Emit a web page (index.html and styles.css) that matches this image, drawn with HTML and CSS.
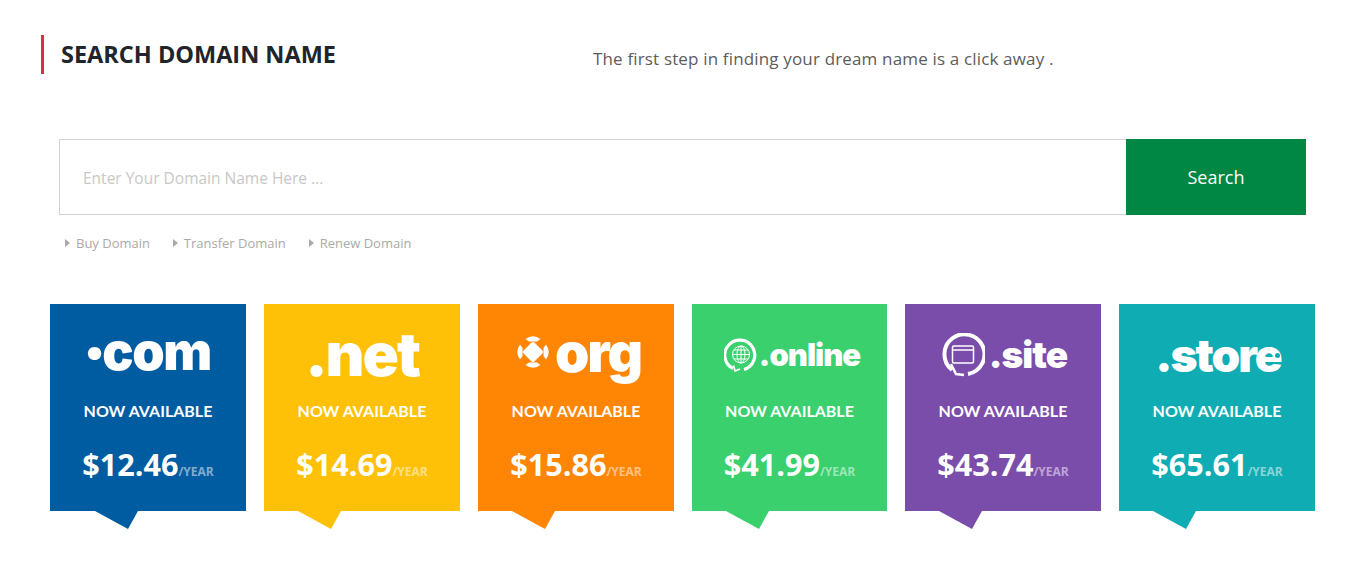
FILE: index.html
```html
<!DOCTYPE html>
<html lang="en">
<head>
  <meta charset="UTF-8">
  <meta name="viewport" content="width=device-width, initial-scale=1.0">
  <title>Search Domain Name</title>
  <link rel="stylesheet" href="styles.css">
</head>
<body>
  <header class="intro">
    <h1>SEARCH DOMAIN NAME</h1>
    <p>The first step in finding your dream name is a click away .</p>
  </header>

  <form class="search">
    <input type="text" placeholder="Enter Your Domain Name Here ...">
    <button type="button">Search</button>
  </form>

  <ul class="links">
    <li><a href="#">Buy Domain</a></li>
    <li><a href="#">Transfer Domain</a></li>
    <li><a href="#">Renew Domain</a></li>
  </ul>

  <section class="cards">
    <article class="card card-com">
      <div class="card-body">
        <div class="logo logo-com"><span class="mid-dot">.</span>com</div>
        <h3>NOW AVAILABLE</h3>
        <p class="price">$12.46<small>/YEAR</small></p>
      </div>
      <svg class="tail" width="43" height="18" viewBox="0 0 43 18"><polygon points="0,0 43,0 33,18"/></svg>
    </article>

    <article class="card card-net">
      <div class="card-body">
        <div class="logo logo-net">.net</div>
        <h3>NOW AVAILABLE</h3>
        <p class="price">$14.69<small>/YEAR</small></p>
      </div>
      <svg class="tail" width="43" height="18" viewBox="0 0 43 18"><polygon points="0,0 43,0 33,18"/></svg>
    </article>

    <article class="card card-org">
      <div class="card-body">
        <div class="logo logo-org">
          <svg width="34" height="34" viewBox="0 0 34 34" fill="#fff">
            <path d="M17 9 25 17 17 25 9 17Z" stroke="#fff" stroke-width="4" stroke-linejoin="round"/>
            <path d="M9.500 4Q17-1.500 24.500 4L21 6.500H13Z"/>
            <path d="M9.500 30Q17 35.500 24.500 30L21 27.500H13Z"/>
            <path d="M4 9.500Q-1.500 17 4 24.500L6.500 21V13Z"/>
            <path d="M30 9.500Q35.500 17 30 24.500L27.500 21V13Z"/>
          </svg>
          <span>org</span>
        </div>
        <h3>NOW AVAILABLE</h3>
        <p class="price">$15.86<small>/YEAR</small></p>
      </div>
      <svg class="tail" width="43" height="18" viewBox="0 0 43 18"><polygon points="0,0 43,0 33,18"/></svg>
    </article>

    <article class="card card-online">
      <div class="card-body">
        <div class="logo logo-online">
          <svg width="34" height="34" viewBox="0 0 34 34" fill="none" stroke="#fff">
            <path d="M9 30.500A15 15 0 1 1 20 31.500" stroke-width="3.200"/>
            <path d="M9.500 27.500 11 33 16 31" stroke-width="1.600"/>
            <g stroke-width="1">
              <circle cx="17" cy="16.500" r="8.500"/>
              <ellipse cx="17" cy="16.500" rx="4" ry="8.500"/>
              <path d="M17 8V25M8.500 16.500H25.500M10 12H24M10 21H24"/>
            </g>
          </svg>
          <span>.online</span>
        </div>
        <h3>NOW AVAILABLE</h3>
        <p class="price">$41.99<small>/YEAR</small></p>
      </div>
      <svg class="tail" width="43" height="18" viewBox="0 0 43 18"><polygon points="0,0 43,0 33,18"/></svg>
    </article>

    <article class="card card-site">
      <div class="card-body">
        <div class="logo logo-site">
          <svg width="44" height="44" viewBox="0 0 44 44" fill="none" stroke="#fff">
            <path d="M11 37A20 20 0 1 1 27 41" stroke-width="4"/>
            <path d="M10 31 15 41 23 42" stroke-width="2.500"/>
            <rect x="11.500" y="13" width="21" height="17" rx="1.500" stroke-width="1.500"/>
            <path d="M12 17H32" stroke-width="1.500"/>
          </svg>
          <span>.site</span>
        </div>
        <h3>NOW AVAILABLE</h3>
        <p class="price">$43.74<small>/YEAR</small></p>
      </div>
      <svg class="tail" width="43" height="18" viewBox="0 0 43 18"><polygon points="0,0 43,0 33,18"/></svg>
    </article>

    <article class="card card-store">
      <div class="card-body">
        <div class="logo logo-store">.store<i class="store-dot"></i></div>
        <h3>NOW AVAILABLE</h3>
        <p class="price">$65.61<small>/YEAR</small></p>
      </div>
      <svg class="tail" width="43" height="18" viewBox="0 0 43 18"><polygon points="0,0 43,0 33,18"/></svg>
    </article>
  </section>
</body>
</html>
```

FILE: styles.css
```css
* { box-sizing: border-box; }
body { margin: 0; padding: 35px 39px 0 50px; font-family: "Open Sans", sans-serif; background: #fff; }

.intro { display: flex; height: 39px; margin-left: -9px; }
.intro h1 { width: 552px; margin: 0; padding: 2px 0 0 17px; border-left: 3px solid #dc2f45; font-size: 23.5px; line-height: 34px; font-weight: 700; color: #212529; }
.intro p { margin: 0; padding-top: 10px; font-size: 17px; line-height: 28px; letter-spacing: .16px; color: #5c5c5c; }

.search { display: flex; height: 76px; margin: 65px 9px 0 9px; }
.search input { flex: 1; padding: 2px 23px 0; border: 1px solid #d2d2d2; border-right: 0; font-family: inherit; font-size: 15.5px; outline: none; }
.search input::placeholder { color: #c8c8c8; opacity: 1; }
.search button { width: 180px; border: 0; background: #008744; color: #fff; font-family: inherit; font-size: 18px; font-weight: 500; }

.links { display: flex; gap: 22.8px; margin: 18px 0 0 15px; padding: 0; list-style: none; font-size: 13px; line-height: 20px; }
.links li { display: flex; align-items: center; }
.links li::before { content: ""; margin-right: 6px; border-left: 5px solid #aaa; border-top: 4px solid transparent; border-bottom: 4px solid transparent; }
.links a { color: #aaa; text-decoration: none; }

.cards { display: grid; grid-template-columns: 196px 196px 196px 195px 196px 196px; gap: 18px; margin-top: 51px; }
.card { color: #fff; text-align: center; }
.card-body { height: 207px; padding-top: 26px; background: var(--tone); }
.tail { display: block; margin-left: 34px; fill: var(--tone); }
.card-com .tail { margin-left: 45px; }

.card-com { --tone: #005ca1; }
.card-net { --tone: #ffc107; }
.card-org { --tone: #ff8505; }
.card-online { --tone: #39d06d; }
.card-site { --tone: #7b4dab; }
.card-store { --tone: #10acb3; }

.card h3 { margin: 21px 0 0; font-family: Lato, sans-serif; font-size: 16px; line-height: 20px; font-weight: 700; }
.price { margin: 23px 0 0; font-size: 30.6px; line-height: 40px; font-weight: 700; }
.price small { font-size: 12px; font-weight: 700; color: rgba(255, 255, 255, .5); }

.logo { position: relative; display: flex; align-items: center; justify-content: center; height: 50px; font-family: Inter, sans-serif; font-weight: 900; line-height: 50px; }
.logo-com { padding-bottom: 6px; font-size: 52px; letter-spacing: -1.5px; }
.mid-dot { margin: 0 -3px 0 -3px; font-size: 66px; transform: translateY(-17px); }
.logo-net { padding-bottom: 3px; font-size: 60px; letter-spacing: -2px; }
.logo-org { gap: 5px; padding: 0 0 6px 5px; font-size: 55px; letter-spacing: -2px; }
.logo-online { gap: 1px; padding-left: 5px; font-size: 31px; letter-spacing: -1px; }
.logo-site { gap: 4px; padding-left: 2px; font-size: 37px; letter-spacing: -1px; }
.logo-store { padding-left: 2px; font-size: 46px; letter-spacing: -2px; }
.store-dot { position: absolute; top: 23px; left: 156px; width: 5px; height: 5px; border-radius: 50%; background: var(--tone); }
```
